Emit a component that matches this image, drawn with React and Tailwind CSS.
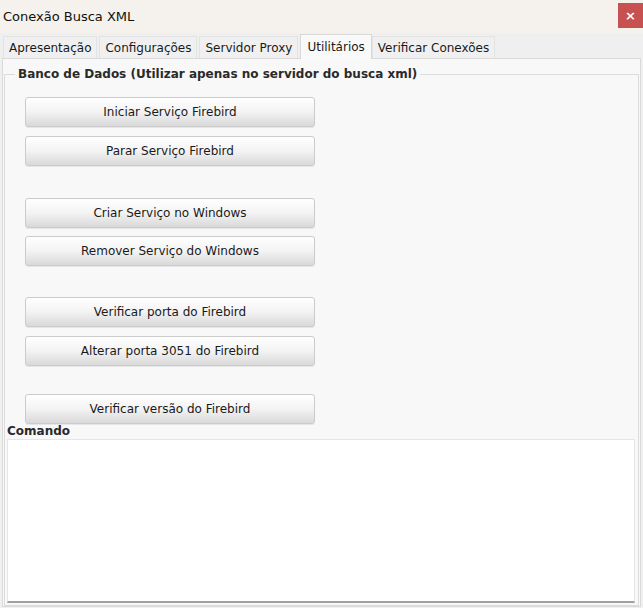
import React from "react";

const font = { fontFamily: '"DejaVu Sans", Verdana, sans-serif' };

function Tab({ label, active }) {
  if (active) {
    return (
      <div className="h-[25px] px-[6px] flex items-start pt-[3px] bg-[#f9f9f9] border border-b-0 border-[#d9d9d9] text-[12px] text-[#1a1a1a] -mb-px z-10">
        {label}
      </div>
    );
  }
  return (
    <div className="h-[22px] px-[5px] flex items-center bg-[#f0f0f0] border border-b-0 border-[#e3e3e3] mr-[2px] text-[12px] text-[#1a1a1a]">
      {label}
    </div>
  );
}

function Btn({ children, className = "" }) {
  return (
    <button
      className={
        "w-[290px] h-[30px] rounded-[3px] border border-[#cbcbcb] bg-gradient-to-b from-[#ffffff] via-[#f3f3f3] to-[#d9d9d9] text-[12px] text-[#1a1a1a] shadow-[0_1px_0_#e6e6e6] " +
        className
      }
    >
      {children}
    </button>
  );
}

export default function App() {
  return (
    <div className="w-[643px] h-[608px] bg-[#f0f0f0] flex flex-col overflow-hidden" style={font}>
      {/* Title bar */}
      <div className="h-[33px] bg-[#f5f1ec] flex items-start justify-between">
        <span className="pl-[3px] pt-[7px] text-[13px] text-[#111]">Conexão Busca XML</span>
        <button className="mt-[3px] w-[25px] h-[25px] bg-[#c75050] text-white text-[13px] font-bold flex items-center justify-center">
          ×
        </button>
      </div>

      {/* Tabs */}
      <div className="h-[25px] bg-[#efefef] flex items-end pl-[3px]">
        <Tab label="Apresentação" />
        <Tab label="Configurações" />
        <Tab label="Servidor Proxy" />
        <Tab label="Utilitários" active />
        <Tab label="Verificar Conexões" />
      </div>

      {/* Panel */}
      <div className="mx-[2px] h-[549px] bg-[#f8f8f8] border border-[#dadada] flex flex-col px-[1px]">
        <fieldset className="mt-[6px] border border-[#dcdcdc] flex-1 flex flex-col px-[2px] pb-[2px]">
          <legend className="ml-[8px] px-[3px] text-[12px] font-semibold text-[#2a2a2a]">
            Banco de Dados (Utilizar apenas no servidor do busca xml)
          </legend>
          <div className="flex flex-col pl-[18px] pt-[14px]">
            <Btn>Iniciar Serviço Firebird</Btn>
            <Btn className="mt-[9px]">Parar Serviço Firebird</Btn>
            <Btn className="mt-[32px]">Criar Serviço no Windows</Btn>
            <Btn className="mt-[8px]">Remover Serviço do Windows</Btn>
            <Btn className="mt-[31px]">Verificar porta do Firebird</Btn>
            <Btn className="mt-[9px]">Alterar porta 3051 do Firebird</Btn>
            <Btn className="mt-[28px]">Verificar versão do Firebird</Btn>
          </div>
          <div className="text-[12px] font-semibold text-[#2a2a2a] leading-[15px]">Comando</div>
          <div className="h-[164px] bg-white border border-[#e6e6e6] border-b-2 border-b-[#a0a0a0] mr-[1px]" />
        </fieldset>
      </div>
    </div>
  );
}
